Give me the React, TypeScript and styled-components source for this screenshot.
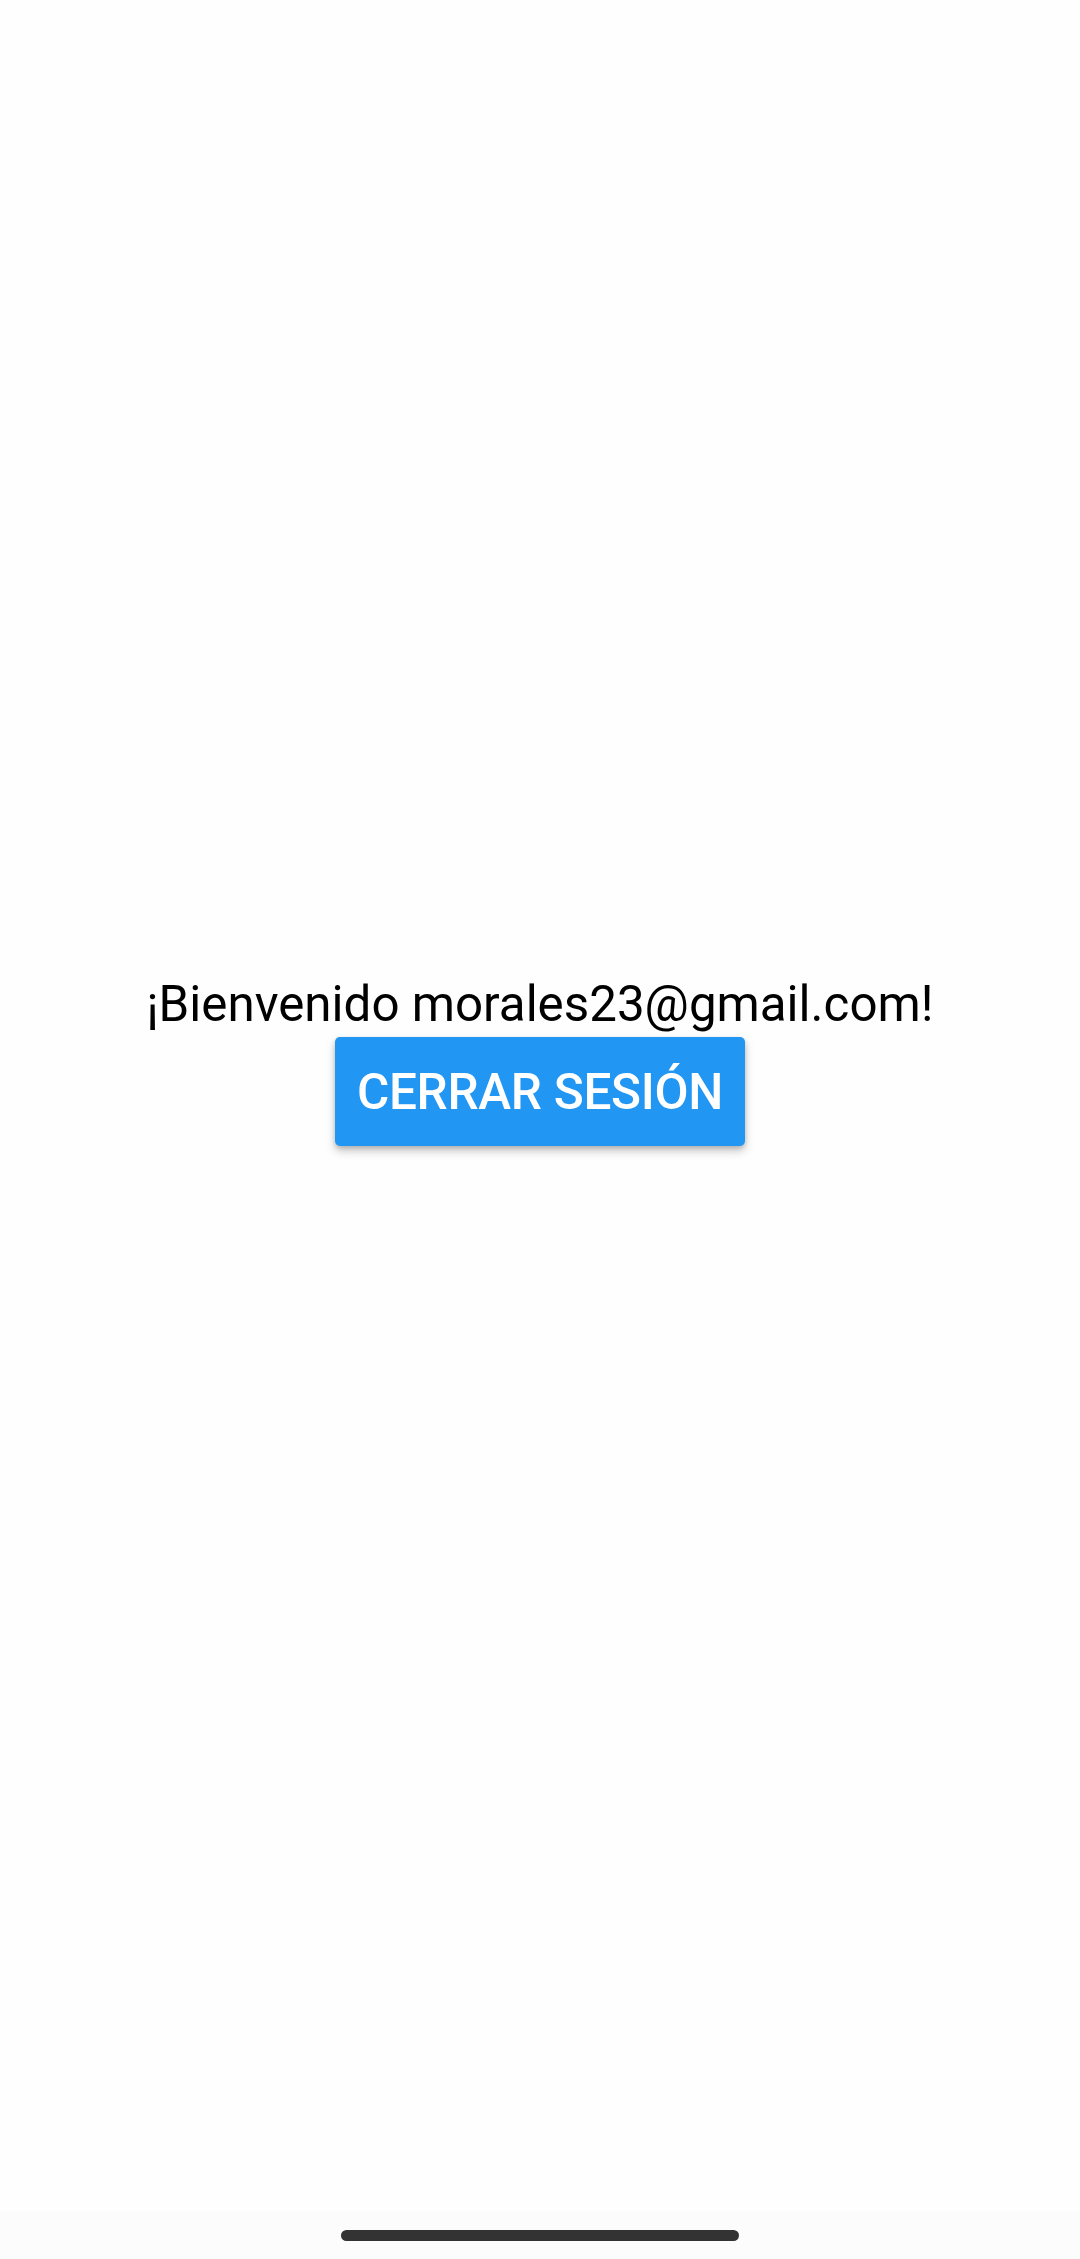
import React from "react";
import styled, { createGlobalStyle } from "styled-components";

const GlobalStyle = createGlobalStyle`
  html, body {
    margin: 0;
    padding: 0;
    background: #ffffff;
  }
  body {
    font-family: Roboto, "Noto Sans", "Liberation Sans", sans-serif;
  }
`;

const Screen = styled.div`
  width: 1080px;
  height: 2259px;
  display: flex;
  flex-direction: column;
  background: #fefefe;
`;

const Content = styled.main`
  flex: 1;
  display: flex;
  flex-direction: column;
  align-items: center;
  padding-top: 971px;
`;

const Welcome = styled.p`
  margin: 0;
  font-size: 49.3px;
  line-height: 66px;
  color: #000000;
`;

const LogoutButton = styled.button`
  height: 109px;
  padding: 0 22px;
  border: none;
  border-radius: 5px;
  background-color: #2196f3;
  color: #ffffff;
  font-family: Roboto, "Noto Sans", sans-serif;
  font-weight: 500;
  font-size: 49.5px;
  letter-spacing: -0.3px;
  box-shadow: 0 5px 10px rgba(0, 0, 0, 0.22), 0 2px 4px rgba(0, 0, 0, 0.14);
  cursor: pointer;
`;

const NavBar = styled.div`
  height: 48px;
  display: flex;
  justify-content: center;
  align-items: flex-start;
  background: #fcfcfc;
`;

const HomeIndicator = styled.span`
  display: block;
  margin-top: 19px;
  width: 398px;
  height: 11px;
  border-radius: 6px;
  background-color: #333333;
`;

const App = () => {
  return (
    <>
      <GlobalStyle />
      <Screen>
        <Content>
          <Welcome>¡Bienvenido morales23@gmail.com!</Welcome>
          <LogoutButton>CERRAR SESIÓN</LogoutButton>
        </Content>
        <NavBar>
          <HomeIndicator />
        </NavBar>
      </Screen>
    </>
  );
};

export default App;
